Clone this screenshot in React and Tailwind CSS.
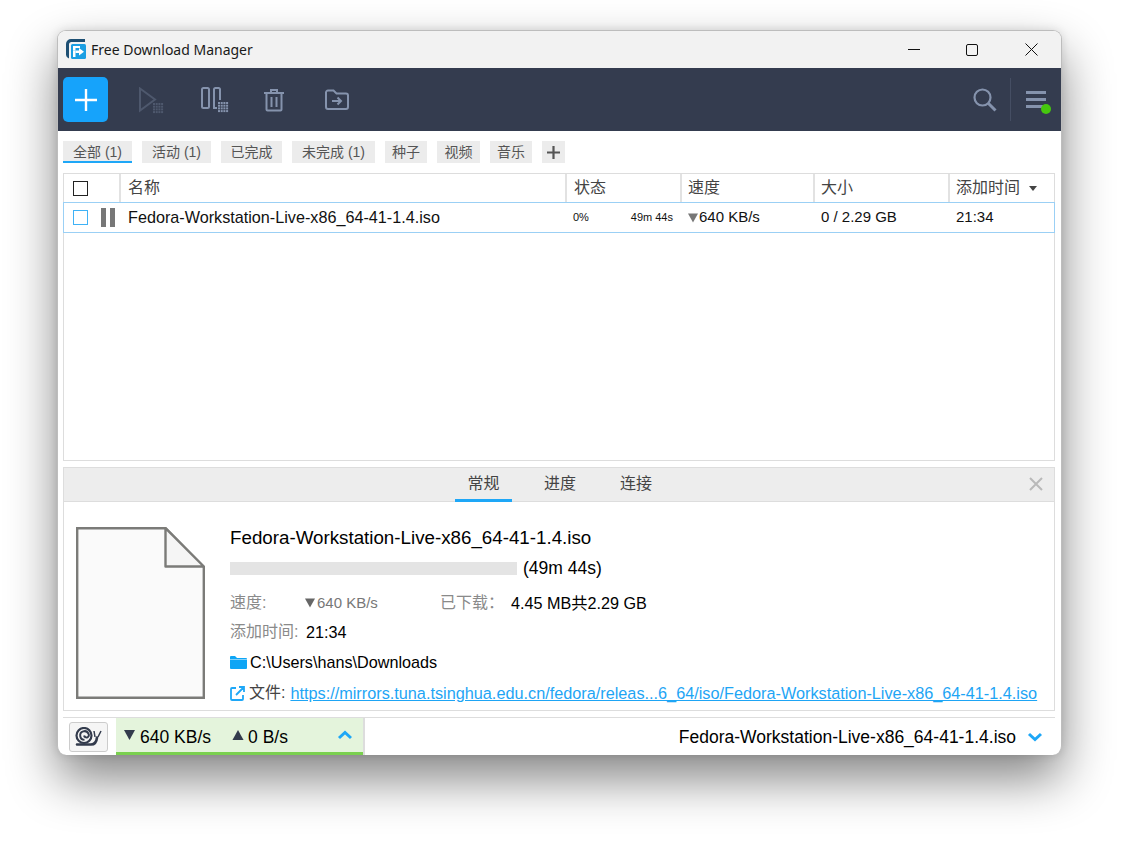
const Down = ({ c = "#555", w = 10, h = 9 }) => (
  <svg width={w} height={h} viewBox="0 0 10 9" className="inline-block shrink-0"><path d="M0 0h10L5 9z" fill={c} /></svg>
);
const Up = ({ c = "#333b4d", w = 12, h = 10 }) => (
  <svg width={w} height={h} viewBox="0 0 10 9" className="inline-block shrink-0"><path d="M0 9h10L5 0z" fill={c} /></svg>
);
const Grid = ({ x, y, c }) => (
  <g fill={c}>
    {[0, 1, 2, 3].map((i) => [0, 1, 2, 3].map((j) => <rect key={i + "-" + j} x={x + i * 2.7} y={y + j * 2.7} width="2" height="2" />))}
  </g>
);
const Chev = ({ up, c = "#1ea7f7" }) => (
  <svg width="16" height="10" viewBox="0 0 16 10" fill="none"><path d={up ? "M2 8l6-5.500L14 8" : "M2 2l6 5.500L14 2"} stroke={c} strokeWidth="3" /></svg>
);

const tabs = [
  ["全部 (1)", "w-[69px] border-b-2 border-[#1ea7f7]"],
  ["活动 (1)", "w-[69px]"],
  ["已完成", "w-[61px]"],
  ["未完成 (1)", "w-[83px]"],
  ["种子", "w-[42px]"],
  ["视频", "w-[43px]"],
  ["音乐", "w-[42px]"],
];

export default function App() {
  return (
    <div className="min-h-[853px] bg-white pt-[30px] pl-[57px] font-['Liberation_Sans','Noto_Sans_CJK_SC',sans-serif] text-black overflow-hidden">
      <div className="w-[1005px] h-[725px] flex flex-col rounded-[9px] overflow-hidden border border-[#bdbdbd] border-b-0 bg-white shadow-[0_24px_50px_rgba(0,0,0,0.48),0_0_10px_rgba(0,0,0,0.12)]">
        {/* title bar */}
        <div className="h-[37px] shrink-0 bg-[#f2f2f2] flex items-center">
          <svg width="20" height="20" viewBox="0 0 20 20" className="ml-[8px] mt-[-1px]">
            <path d="M0 5a5 5 0 0 1 5-5h14v3H5.500A2.500 2.500 0 0 0 3 5.500V19.500A4 4 0 0 1 0 16z" fill="#1d4f73" />
            <rect x="5" y="5" width="15" height="15" rx="1.500" fill="#1b9fe3" />
            <path d="M7 7h7v2h-4.500v2.500H7z" fill="#fff" />
            <path d="M7 11.500h2.500V18H7z" fill="#fff" />
            <path d="M9.500 11.500h3.500V9l5 3.800-5 3.800v-2.600H9.500z" fill="#fff" />
          </svg>
          <span className="ml-[5px] text-[14px] text-[#1a1a1a] font-['Noto_Sans',sans-serif] mt-[-1px]">Free Download Manager</span>
          <div className="ml-auto flex items-center mr-[8px]">
            <svg width="12" height="2" viewBox="0 0 12 2" className="mr-[46px]"><rect width="12" height="1" fill="#111" /></svg>
            <svg width="12" height="12" viewBox="0 0 12 12" className="mr-[47px]"><rect x=".5" y=".5" width="11" height="11" rx="1.500" fill="none" stroke="#111" /></svg>
            <svg width="13" height="13" viewBox="0 0 13 13" className="mr-[15px]"><path d="M.5.5l12 12M12.500.5l-12 12" stroke="#111" strokeWidth="1" /></svg>
          </div>
        </div>
        {/* toolbar */}
        <div className="h-[63px] shrink-0 bg-[#343c4f] flex items-center">
          <div className="ml-[5px] w-[45px] h-[45px] rounded-[5px] bg-[#16a3fb] flex items-center justify-center">
            <svg width="22" height="22" viewBox="0 0 22 22"><path d="M11 0v22M0 11h22" stroke="#fff" strokeWidth="2.400" /></svg>
          </div>
          <svg width="26" height="28" viewBox="0 0 26 28" className="ml-[30px] mt-[3px]" fill="none">
            <path d="M2 1.500L17 12.500 2 23.500z" stroke="#4e586d" strokeWidth="2" />
            <Grid x={15} y={16} c="#4e586d" />
          </svg>
          <svg width="28" height="26" viewBox="0 0 28 26" className="ml-[37px]" fill="none">
            <rect x="1" y="1" width="7" height="20" rx="1.500" stroke="#8593ad" strokeWidth="2" />
            <path d="M13 21V2.500A1.500 1.500 0 0 1 14.500 1h3A1.500 1.500 0 0 1 19 2.500V13" stroke="#8593ad" strokeWidth="2" />
            <path d="M12 21h4" stroke="#8593ad" strokeWidth="2" />
            <Grid x={17} y={15} c="#8593ad" />
          </svg>
          <svg width="22" height="24" viewBox="0 0 22 24" className="ml-[34px]" fill="none" stroke="#8593ad" strokeWidth="2">
            <path d="M1 5h20M8 5V2h6v3M3.500 5v16.500a1 1 0 0 0 1 1h13a1 1 0 0 0 1-1V5M8.500 9v10M13.500 9v10" />
          </svg>
          <svg width="24" height="22" viewBox="0 0 24 22" className="ml-[40px]" fill="none" stroke="#8593ad" strokeWidth="2">
            <path d="M1 3.500A2 2 0 0 1 3 1.500h5.500l3 3H21a2 2 0 0 1 2 2V18a2 2 0 0 1-2 2H3a2 2 0 0 1-2-2z" />
            <path d="M7 12h9M12.500 8.500L16 12l-3.500 3.500" />
          </svg>
          <div className="ml-auto flex items-center">
            <svg width="24" height="24" viewBox="0 0 24 24" fill="none" stroke="#8593ad" className="mr-[13px]">
              <circle cx="9.500" cy="9.500" r="8" strokeWidth="2.200" />
              <path d="M15.500 15.500l7 7" strokeWidth="3" />
            </svg>
            <div className="w-px h-[43px] bg-[#454e63] mr-[15px]" />
            <div className="relative w-[20px] h-[17px] mr-[15px] mt-[-1px] flex flex-col justify-between">
              <div className="h-[3px] bg-[#8593ad]" />
              <div className="h-[3px] bg-[#8593ad]" />
              <div className="h-[3px] bg-[#8593ad]" />
              <div className="absolute left-[15px] top-[13px] w-[10px] h-[10px] rounded-full bg-[#46c80e]" />
            </div>
          </div>
        </div>
        {/* filter tabs */}
        <div className="h-[42px] shrink-0 flex items-center gap-[10px] pl-[5px]">
          {tabs.map(([t, cls]) => (
            <div key={t} className={"h-[22px] text-center bg-[#ececec] text-[14px] leading-[23px] text-[#555] whitespace-nowrap " + cls}>{t}</div>
          ))}
          <div className="h-[22px] w-[23px] bg-[#ececec] flex items-center justify-center">
            <svg width="13" height="13" viewBox="0 0 13 13"><path d="M6.500 0v13M0 6.500h13" stroke="#555" strokeWidth="2.200" /></svg>
          </div>
        </div>
        {/* table */}
        <div className="ml-[5px] mr-[6px] h-[288px] shrink-0 border border-[#ddd] flex flex-col">
          <div className="h-[29px] shrink-0 flex text-[16px] leading-[27px] text-[#444] border-b border-[#ddd]">
            <div className="w-[57px] shrink-0 border-r-2 border-[#e2e2e2] flex items-center pl-[9px]">
              <div className="w-[15px] h-[15px] border border-[#222] bg-white" />
            </div>
            <div className="w-[446px] shrink-0 border-r-2 border-[#e2e2e2] pl-[7px]">名称</div>
            <div className="w-[115px] shrink-0 border-r-2 border-[#e2e2e2] pl-[7px]">状态</div>
            <div className="w-[133px] shrink-0 border-r-2 border-[#e2e2e2] pl-[6px]">速度</div>
            <div className="w-[135px] shrink-0 border-r-2 border-[#e2e2e2] pl-[6px]">大小</div>
            <div className="flex-1 pl-[6px] flex items-start">添加时间
              <svg width="8" height="5" viewBox="0 0 8 5" className="ml-[9px] mt-[12px]"><path d="M0 0h8L4 5z" fill="#444" /></svg>
            </div>
          </div>
          <div className="h-[31px] shrink-0 mx-[-1px] mt-[-1px] border border-[#9bd0f5] flex items-center text-[#111]">
            <div className="w-[58px] shrink-0 flex items-center pl-[9px]">
              <div className="w-[15px] h-[15px] border border-[#3fb2f6] bg-white" />
              <div className="ml-[13px] w-[5px] h-[19px] bg-[#777]" />
              <div className="ml-[4px] w-[5px] h-[19px] bg-[#777]" />
            </div>
            <div className="w-[446px] shrink-0 pl-[6px] text-[16.200px] whitespace-nowrap">Fedora-Workstation-Live-x86_64-41-1.4.iso</div>
            <div className="w-[115px] shrink-0 flex justify-between pl-[5px] pr-[10px] text-[11px]"><span>0%</span><span>49m 44s</span></div>
            <div className="w-[133px] shrink-0 pl-[5px] flex items-center gap-[1px] text-[15px]"><Down c="#777" w={10} h={10} />640 KB/s</div>
            <div className="w-[135px] shrink-0 pl-[5px] text-[15px]">0 / 2.29 GB</div>
            <div className="flex-1 pl-[5px] text-[15px]">21:34</div>
          </div>
        </div>
        {/* details */}
        <div className="ml-[5px] mr-[6px] mt-[6px] h-[244px] shrink-0 border border-[#ddd] flex flex-col">
          <div className="relative h-[34px] shrink-0 bg-[#ededed] border-b border-[#ddd] flex text-[16px] text-[#444] pl-[391px]">
            <div className="w-[57px] text-center leading-[31px] border-b-[3px] border-[#1ea7f7] h-[34px]">常规</div>
            <div className="w-[76px] ml-[10px] text-center leading-[31px]">进度</div>
            <div className="w-[76px] text-center leading-[31px]">连接</div>
            <svg width="14" height="14" viewBox="0 0 14 14" className="absolute right-[11px] top-[9px]"><path d="M1 1l12 12M13 1L1 13" stroke="#b9b9b9" strokeWidth="2" /></svg>
          </div>
          <div className="flex-1 flex pl-[12px] pt-[25px] min-h-0">
            <svg width="130" height="172" viewBox="0 0 130 172" className="shrink-0">
              <path d="M1.200 1.200H89.500L127.800 40V170.800H1.200z" fill="#fafafa" stroke="#7b7b78" strokeWidth="2.400" />
              <path d="M89.500 1.200V39.500H127.800z" fill="#f5f5f5" stroke="#7b7b78" strokeWidth="2.400" strokeLinejoin="round" />
            </svg>
            <div className="ml-[24px] flex-1 min-w-0">
              <div className="text-[18.750px] leading-[22px] whitespace-nowrap">Fedora-Workstation-Live-x86_64-41-1.4.iso</div>
              <div className="flex items-center mt-[8px] h-[22px] text-[17.500px]">
                <div className="w-[287px] h-[13px] bg-[#e4e4e4] mr-[6px]" />(49m 44s)
              </div>
              <div className="flex items-center mt-[14px] h-[20px] text-[16px]">
                <span className="w-[75px] text-[#8a8a8a]">速度:</span>
                <span className="w-[135px] flex items-center text-[#777] text-[15px]"><Down c="#666" w={10} h={10} /><span className="ml-[2px]">640 KB/s</span></span>
                <span className="w-[71px] text-[#8a8a8a] whitespace-nowrap">已下载：</span>
                <span className="text-[16.200px]">4.45 MB共2.29 GB</span>
              </div>
              <div className="flex items-center mt-[9px] h-[20px] text-[16px]">
                <span className="w-[76px] text-[#8a8a8a] whitespace-nowrap">添加时间:</span>
                <span className="text-[16.200px]">21:34</span>
              </div>
              <div className="flex items-center mt-[10px] h-[20px] text-[16.200px]">
                <svg width="17" height="14" viewBox="0 0 17 14" className="mr-[3px]"><path d="M0 2a1 1 0 0 1 1-1h4l2 2h9a1 1 0 0 1 1 1H0z" fill="#0ea5f5" /><path d="M0 4.500h17V13a1 1 0 0 1-1 1H1a1 1 0 0 1-1-1z" fill="#0ea5f5" /></svg>
                C:\Users\hans\Downloads
              </div>
              <div className="flex items-center mt-[11px] h-[20px] text-[16.250px] whitespace-nowrap">
                <svg width="15" height="15" viewBox="0 0 15 15" fill="none" stroke="#1ea7f7" strokeWidth="1.800" className="mr-[4px]"><path d="M6 2H2a1 1 0 0 0-1 1v10a1 1 0 0 0 1 1h10a1 1 0 0 0 1-1V9M6 9l8-8M9 1h5v5" /></svg>
                <span className="text-[#444] text-[16px]">文件:</span>
                <span className="ml-[5px] text-[#1ea5f5] underline">https://mirrors.tuna.tsinghua.edu.cn/fedora/releas...6_64/iso/Fedora-Workstation-Live-x86_64-41-1.4.iso</span>
              </div>
            </div>
          </div>
        </div>
        {/* status bar */}
        <div className="mt-[6px] ml-[5px] mr-[6px] flex-1 border-t border-[#ddd] flex items-stretch">
          <div className="w-[53px] shrink-0 flex items-center pl-[6px]">
            <div className="w-[39px] h-[30px] rounded-[3px] border border-[#ccc] bg-[#f5f5f5] flex items-center justify-center">
              <svg width="27" height="19" viewBox="0 0 27 19" fill="none" stroke="#333b4d">
                <circle cx="9" cy="8.500" r="7.500" strokeWidth="2.200" />
                <path d="M9.500 12.800a4.300 4.300 0 1 1 3.900-6.100 2.400 2.400 0 1 1-4.300 1.800" strokeWidth="2" />
                <path d="M2 17.500h14c3.500 0 5.500-2 6-7" strokeWidth="2.600" strokeLinecap="round" />
                <path d="M20 10l-1-6M23 10l3-6" strokeWidth="1.500" />
              </svg>
            </div>
          </div>
          <div className="w-[247px] shrink-0 bg-[#e4f4dc] border-b-[3px] border-[#7ad04f] flex items-center text-[17.500px] pl-[8px]">
            <Down c="#333b4d" w={11} h={10} />
            <span className="ml-[5px] pt-[4px]">640 KB/s</span>
            <span className="ml-[21px] flex items-center"><Up c="#333b4d" w={12} h={10} /><span className="ml-[4px] pt-[4px]">0 B/s</span></span>
            <span className="ml-auto mr-[10px]"><Chev up /></span>
          </div>
          <div className="w-[2px] bg-[#ddd] shrink-0" />
          <div className="flex-1 flex items-center justify-end text-[17.500px] pr-[12px]">
            <span className="pt-[2px]">Fedora-Workstation-Live-x86_64-41-1.4.iso</span>
            <span className="ml-[11px]"><Chev /></span>
          </div>
        </div>
      </div>
    </div>
  );
}
